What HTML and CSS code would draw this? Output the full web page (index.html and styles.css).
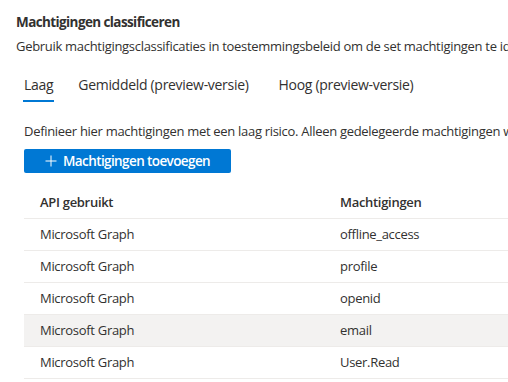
FILE: index.html
```html
<!doctype html>
<html lang="nl">
<head>
  <meta charset="UTF-8">
  <meta name="viewport" content="width=device-width, initial-scale=1.0">
  <title>Machtigingen classificeren</title>
  <link rel="stylesheet" href="styles.css">
</head>
<body>
  <div class="panel">
    <h2 class="title">Machtigingen classificeren</h2>
    <p class="desc">Gebruik machtigingsclassificaties in toestemmingsbeleid om de set machtigingen te identificeren die gebruikers mogen toestaan.</p>

    <div class="tabs">
      <div class="tab active">Laag</div>
      <div class="tab tab-mid">Gemiddeld (preview-versie)</div>
      <div class="tab">Hoog (preview-versie)</div>
    </div>

    <div class="content">
      <p class="info">Definieer hier machtigingen met een laag risico. Alleen gedelegeerde machtigingen worden ondersteund.</p>
      <button class="add-btn">
        <svg width="12" height="12" viewBox="0 0 12 12"><path d="M6 0.5v11M0.5 6h11" stroke="#fff" stroke-width="1" fill="none"/></svg>
        Machtigingen toevoegen
      </button>

      <table class="perm-table">
        <thead>
          <tr><th class="col-api">API gebruikt</th><th>Machtigingen</th></tr>
        </thead>
        <tbody>
          <tr><td>Microsoft Graph</td><td>offline_access</td></tr>
          <tr><td>Microsoft Graph</td><td>profile</td></tr>
          <tr><td>Microsoft Graph</td><td>openid</td></tr>
          <tr class="hover"><td>Microsoft Graph</td><td>email</td></tr>
          <tr><td>Microsoft Graph</td><td>User.Read</td></tr>
        </tbody>
      </table>
    </div>
  </div>
</body>
</html>
```

FILE: styles.css
```css
* {
  margin: 0;
  padding: 0;
  box-sizing: border-box;
}
body {
  font-family: 'Open Sans', 'Noto Sans', sans-serif;
  color: #323130;
  background: #fff;
  overflow: hidden;
  width: 508px;
  height: 382px;
  letter-spacing: -0.3px;
}
.panel {
  padding: 12px 0 0 16px;
  width: 700px;
}
.title {
  font-size: 13.5px;
  font-weight: 700;
  line-height: 20px;
  letter-spacing: -0.6px;
}
.desc {
  margin-top: 4px;
  font-size: 13px;
  line-height: 20px;
  white-space: nowrap;
}
.tabs {
  display: flex;
  margin-top: 15px;
  padding-left: 8px;
  height: 36px;
}
.tab {
  font-size: 14px;
  line-height: 20px;
  padding-top: 4px;
  margin-right: 25px;
  position: relative;
  white-space: nowrap;
}
.tab-mid {
  margin-right: 30px;
}
.tab.active::after {
  content: '';
  position: absolute;
  left: -1px;
  right: -1px;
  bottom: 5px;
  height: 2px;
  background: #0078d4;
}
.content {
  padding-left: 8px;
}
.info {
  margin-top: 14px;
  font-size: 13px;
  line-height: 20px;
  white-space: nowrap;
}
.add-btn {
  margin-top: 8px;
  height: 24px;
  width: 207px;
  background: #0078d4;
  border: none;
  border-radius: 2px;
  color: #fff;
  font-family: inherit;
  font-size: 13.5px;
  font-weight: 600;
  letter-spacing: -0.6px;
  display: flex;
  align-items: center;
  gap: 6px;
  padding-left: 21px;
  cursor: pointer;
}
.perm-table {
  margin-top: 13px;
  border-collapse: collapse;
  width: 600px;
  font-size: 13px;
}
.perm-table th,
.perm-table td {
  text-align: left;
  padding: 0 16px;
  height: 32px;
  border-bottom: 1px solid #edebe9;
  white-space: nowrap;
}
.perm-table th {
  font-weight: 600;
}
.col-api {
  width: 300px;
}
.perm-table tr.hover td {
  background: #f3f2f1;
}
```
